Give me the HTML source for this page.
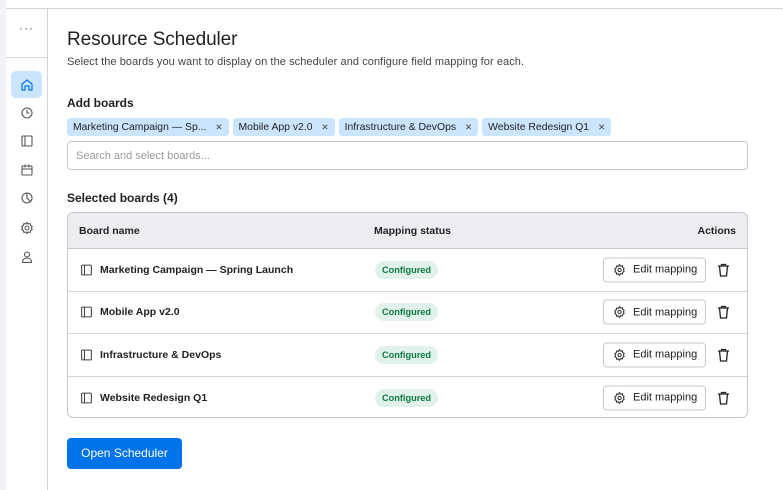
<!DOCTYPE html>
<html><head><style>
*{box-sizing:border-box;margin:0;padding:0}
body{width:783px;height:490px;overflow:hidden;background:#fff;font-family:"Liberation Sans",sans-serif;color:#323338;position:relative}
.strip{position:absolute;left:0;top:0;width:6px;height:490px;background:#f3f4fa}
.topline{position:absolute;left:6px;top:8px;right:0;height:1px;background:#d0d2dc}
.side{position:absolute;left:6px;top:9px;width:42px;height:481px;border-right:1px solid #d0d2dc;background:#fff}
.side .dots{position:absolute;top:12px;left:0;width:41px;text-align:center;font-size:12px;color:#555;letter-spacing:1px}
.side .div{position:absolute;top:48px;left:0;width:41px;height:1px;background:#d0d2dc}
.ic{position:absolute;left:13px;width:16px;height:16px}
.act{position:absolute;left:5px;top:62px;width:31px;height:27px;border-radius:5px;background:#cce5ff}
h1{position:absolute;left:67px;top:29px;font-size:19px;font-weight:normal;color:#222;letter-spacing:-0.1px}
.sub{position:absolute;left:67px;top:56px;font-size:11px;color:#444;letter-spacing:0.07px}
.h2{position:absolute;left:67px;font-size:12px;font-weight:bold;color:#222}
.chips{position:absolute;left:67px;top:118px;display:flex;gap:4px}
.chip{background:#cce5ff;height:18px;line-height:18px;padding:0 6px;font-size:10.4px;border-radius:3px;color:#222}
.chip b{font-weight:normal;font-size:8.5px;margin-left:9px;color:#444}
.search{position:absolute;left:67px;top:141px;width:681px;height:29px;border:1px solid #c5c7d0;border-radius:4px;font-size:11px;color:#999;padding:8px 8px}
.tbl{position:absolute;left:67px;top:212px;width:681px;height:206px;border:1px solid #c5c7d0;border-radius:6px;overflow:hidden}
.hd{height:36px;background:#ecedf1;border-bottom:1px solid #c5c7d0;position:relative;font-size:10.5px;font-weight:bold;color:#222}
.row{height:42.5px;border-bottom:1px solid #d0d2dc;position:relative;font-size:10.5px;font-weight:bold;color:#222}
.row:last-child{border-bottom:none}
.c{position:absolute;top:50%;transform:translateY(-50%)}
.badge{background:#e1f2ea;color:#0d7a40;font-size:9.2px;font-weight:bold;padding:4px 7px;border-radius:9px}
.btn{position:absolute;left:535px;top:50%;transform:translateY(-50%);width:103px;height:25px;border:1px solid #c5c7d0;border-radius:4px;font-size:11px;font-weight:normal;display:flex;align-items:center;padding-left:9px;gap:7px;color:#222}
.open{position:absolute;left:67px;top:438px;width:115px;height:31px;background:#0073ea;color:#fff;border-radius:4px;font-size:12px;text-align:center;line-height:31px}
</style></head><body>
<div class="strip"></div>
<div class="topline"></div>
<div class="side">
<div class="dots">···</div>
<div class="div"></div>
<div class="act"></div>
<svg class="ic" style="top:68px" viewBox="0 0 16 16" fill="none" stroke="#0073ea" stroke-width="1.2"><path d="M3 7l5-4 5 4v6H10V9H6v4H3z"/></svg>
<svg class="ic" style="top:96px" viewBox="0 0 16 16" fill="none" stroke="#555" stroke-width="1.1"><circle cx="8" cy="8" r="5"/><path d="M8 5v3h2.5"/></svg>
<svg class="ic" style="top:124px" viewBox="0 0 16 16" fill="none" stroke="#555" stroke-width="1.1"><rect x="3" y="3" width="10" height="10" rx="1"/><path d="M6 3v10"/></svg>
<svg class="ic" style="top:153px" viewBox="0 0 16 16" fill="none" stroke="#555" stroke-width="1.1"><rect x="3" y="4" width="10" height="9" rx="1"/><path d="M3 7h10M6 2.5v3M10 2.5v3"/></svg>
<svg class="ic" style="top:181px" viewBox="0 0 16 16" fill="none" stroke="#555" stroke-width="1.1"><circle cx="8" cy="8" r="5"/><path d="M8 3v5l3.5 3.5"/></svg>
<svg class="ic" style="top:211px" viewBox="0 0 16 16" fill="none" stroke="#555" stroke-width="1.1"><circle cx="8" cy="8" r="2"/><path d="M8 2.5l1.2 1.5 1.9-.5.5 1.9 1.6 1-.8 1.6.8 1.6-1.6 1-.5 1.9-1.9-.5L8 13.5l-1.2-1.5-1.9.5-.5-1.9-1.6-1 .8-1.6-.8-1.6 1.6-1 .5-1.9 1.9.5z"/></svg>
<svg class="ic" style="top:240px" viewBox="0 0 16 16" fill="none" stroke="#555" stroke-width="1.1"><circle cx="8" cy="5.5" r="2.5"/><path d="M3.5 13.5c0-3 2-4.5 4.5-4.5s4.5 1.5 4.5 4.5z"/></svg>
</div>
<h1>Resource Scheduler</h1>
<div class="sub">Select the boards you want to display on the scheduler and configure field mapping for each.</div>
<div class="h2" style="top:96px">Add boards</div>
<div class="chips">
<div class="chip">Marketing Campaign — Sp...<b>✕</b></div>
<div class="chip">Mobile App v2.0<b>✕</b></div>
<div class="chip">Infrastructure &amp; DevOps<b>✕</b></div>
<div class="chip">Website Redesign Q1<b>✕</b></div>
</div>
<div class="search">Search and select boards...</div>
<div class="h2" style="top:191px">Selected boards (4)</div>
<div class="tbl">
<div class="hd"><span class="c" style="left:11px">Board name</span><span class="c" style="left:306px">Mapping status</span><span class="c" style="right:11px">Actions</span></div>
<div class="row"><svg class="c" style="left:12px" width="13" height="13" viewBox="0 0 16 16" fill="none" stroke="#444" stroke-width="1.3"><rect x="2" y="2" width="12" height="12" rx="1"/><path d="M5.5 2v12"/></svg><span class="c" style="left:32px">Marketing Campaign — Spring Launch</span><span class="c badge" style="left:307px">Configured</span><div class="btn"><svg width="13" height="13" viewBox="0 0 16 16" fill="none" stroke="#333" stroke-width="1.3"><circle cx="8" cy="8" r="2"/><path d="M8 1.5l1.3 1.7 2.1-.5.5 2.1 1.8 1.1-.9 1.9.9 1.9-1.8 1.1-.5 2.1-2.1-.5L8 14.5l-1.3-1.7-2.1.5-.5-2.1-1.8-1.1.9-1.9-.9-1.9 1.8-1.1.5-2.1 2.1.5z"/></svg>Edit mapping</div><svg class="c" style="left:649px" width="13" height="14" viewBox="0 0 13 14" fill="none" stroke="#222" stroke-width="1.3"><path d="M1 3h11M4.5 3V1.5h4V3M2.5 3l1 10h6l1-10"/></svg></div>
<div class="row"><svg class="c" style="left:12px" width="13" height="13" viewBox="0 0 16 16" fill="none" stroke="#444" stroke-width="1.3"><rect x="2" y="2" width="12" height="12" rx="1"/><path d="M5.5 2v12"/></svg><span class="c" style="left:32px">Mobile App v2.0</span><span class="c badge" style="left:307px">Configured</span><div class="btn"><svg width="13" height="13" viewBox="0 0 16 16" fill="none" stroke="#333" stroke-width="1.3"><circle cx="8" cy="8" r="2"/><path d="M8 1.5l1.3 1.7 2.1-.5.5 2.1 1.8 1.1-.9 1.9.9 1.9-1.8 1.1-.5 2.1-2.1-.5L8 14.5l-1.3-1.7-2.1.5-.5-2.1-1.8-1.1.9-1.9-.9-1.9 1.8-1.1.5-2.1 2.1.5z"/></svg>Edit mapping</div><svg class="c" style="left:649px" width="13" height="14" viewBox="0 0 13 14" fill="none" stroke="#222" stroke-width="1.3"><path d="M1 3h11M4.5 3V1.5h4V3M2.5 3l1 10h6l1-10"/></svg></div>
<div class="row"><svg class="c" style="left:12px" width="13" height="13" viewBox="0 0 16 16" fill="none" stroke="#444" stroke-width="1.3"><rect x="2" y="2" width="12" height="12" rx="1"/><path d="M5.5 2v12"/></svg><span class="c" style="left:32px">Infrastructure &amp; DevOps</span><span class="c badge" style="left:307px">Configured</span><div class="btn"><svg width="13" height="13" viewBox="0 0 16 16" fill="none" stroke="#333" stroke-width="1.3"><circle cx="8" cy="8" r="2"/><path d="M8 1.5l1.3 1.7 2.1-.5.5 2.1 1.8 1.1-.9 1.9.9 1.9-1.8 1.1-.5 2.1-2.1-.5L8 14.5l-1.3-1.7-2.1.5-.5-2.1-1.8-1.1.9-1.9-.9-1.9 1.8-1.1.5-2.1 2.1.5z"/></svg>Edit mapping</div><svg class="c" style="left:649px" width="13" height="14" viewBox="0 0 13 14" fill="none" stroke="#222" stroke-width="1.3"><path d="M1 3h11M4.5 3V1.5h4V3M2.5 3l1 10h6l1-10"/></svg></div>
<div class="row"><svg class="c" style="left:12px" width="13" height="13" viewBox="0 0 16 16" fill="none" stroke="#444" stroke-width="1.3"><rect x="2" y="2" width="12" height="12" rx="1"/><path d="M5.5 2v12"/></svg><span class="c" style="left:32px">Website Redesign Q1</span><span class="c badge" style="left:307px">Configured</span><div class="btn"><svg width="13" height="13" viewBox="0 0 16 16" fill="none" stroke="#333" stroke-width="1.3"><circle cx="8" cy="8" r="2"/><path d="M8 1.5l1.3 1.7 2.1-.5.5 2.1 1.8 1.1-.9 1.9.9 1.9-1.8 1.1-.5 2.1-2.1-.5L8 14.5l-1.3-1.7-2.1.5-.5-2.1-1.8-1.1.9-1.9-.9-1.9 1.8-1.1.5-2.1 2.1.5z"/></svg>Edit mapping</div><svg class="c" style="left:649px" width="13" height="14" viewBox="0 0 13 14" fill="none" stroke="#222" stroke-width="1.3"><path d="M1 3h11M4.5 3V1.5h4V3M2.5 3l1 10h6l1-10"/></svg></div>
</div>
<div class="open">Open Scheduler</div>
</body></html>
